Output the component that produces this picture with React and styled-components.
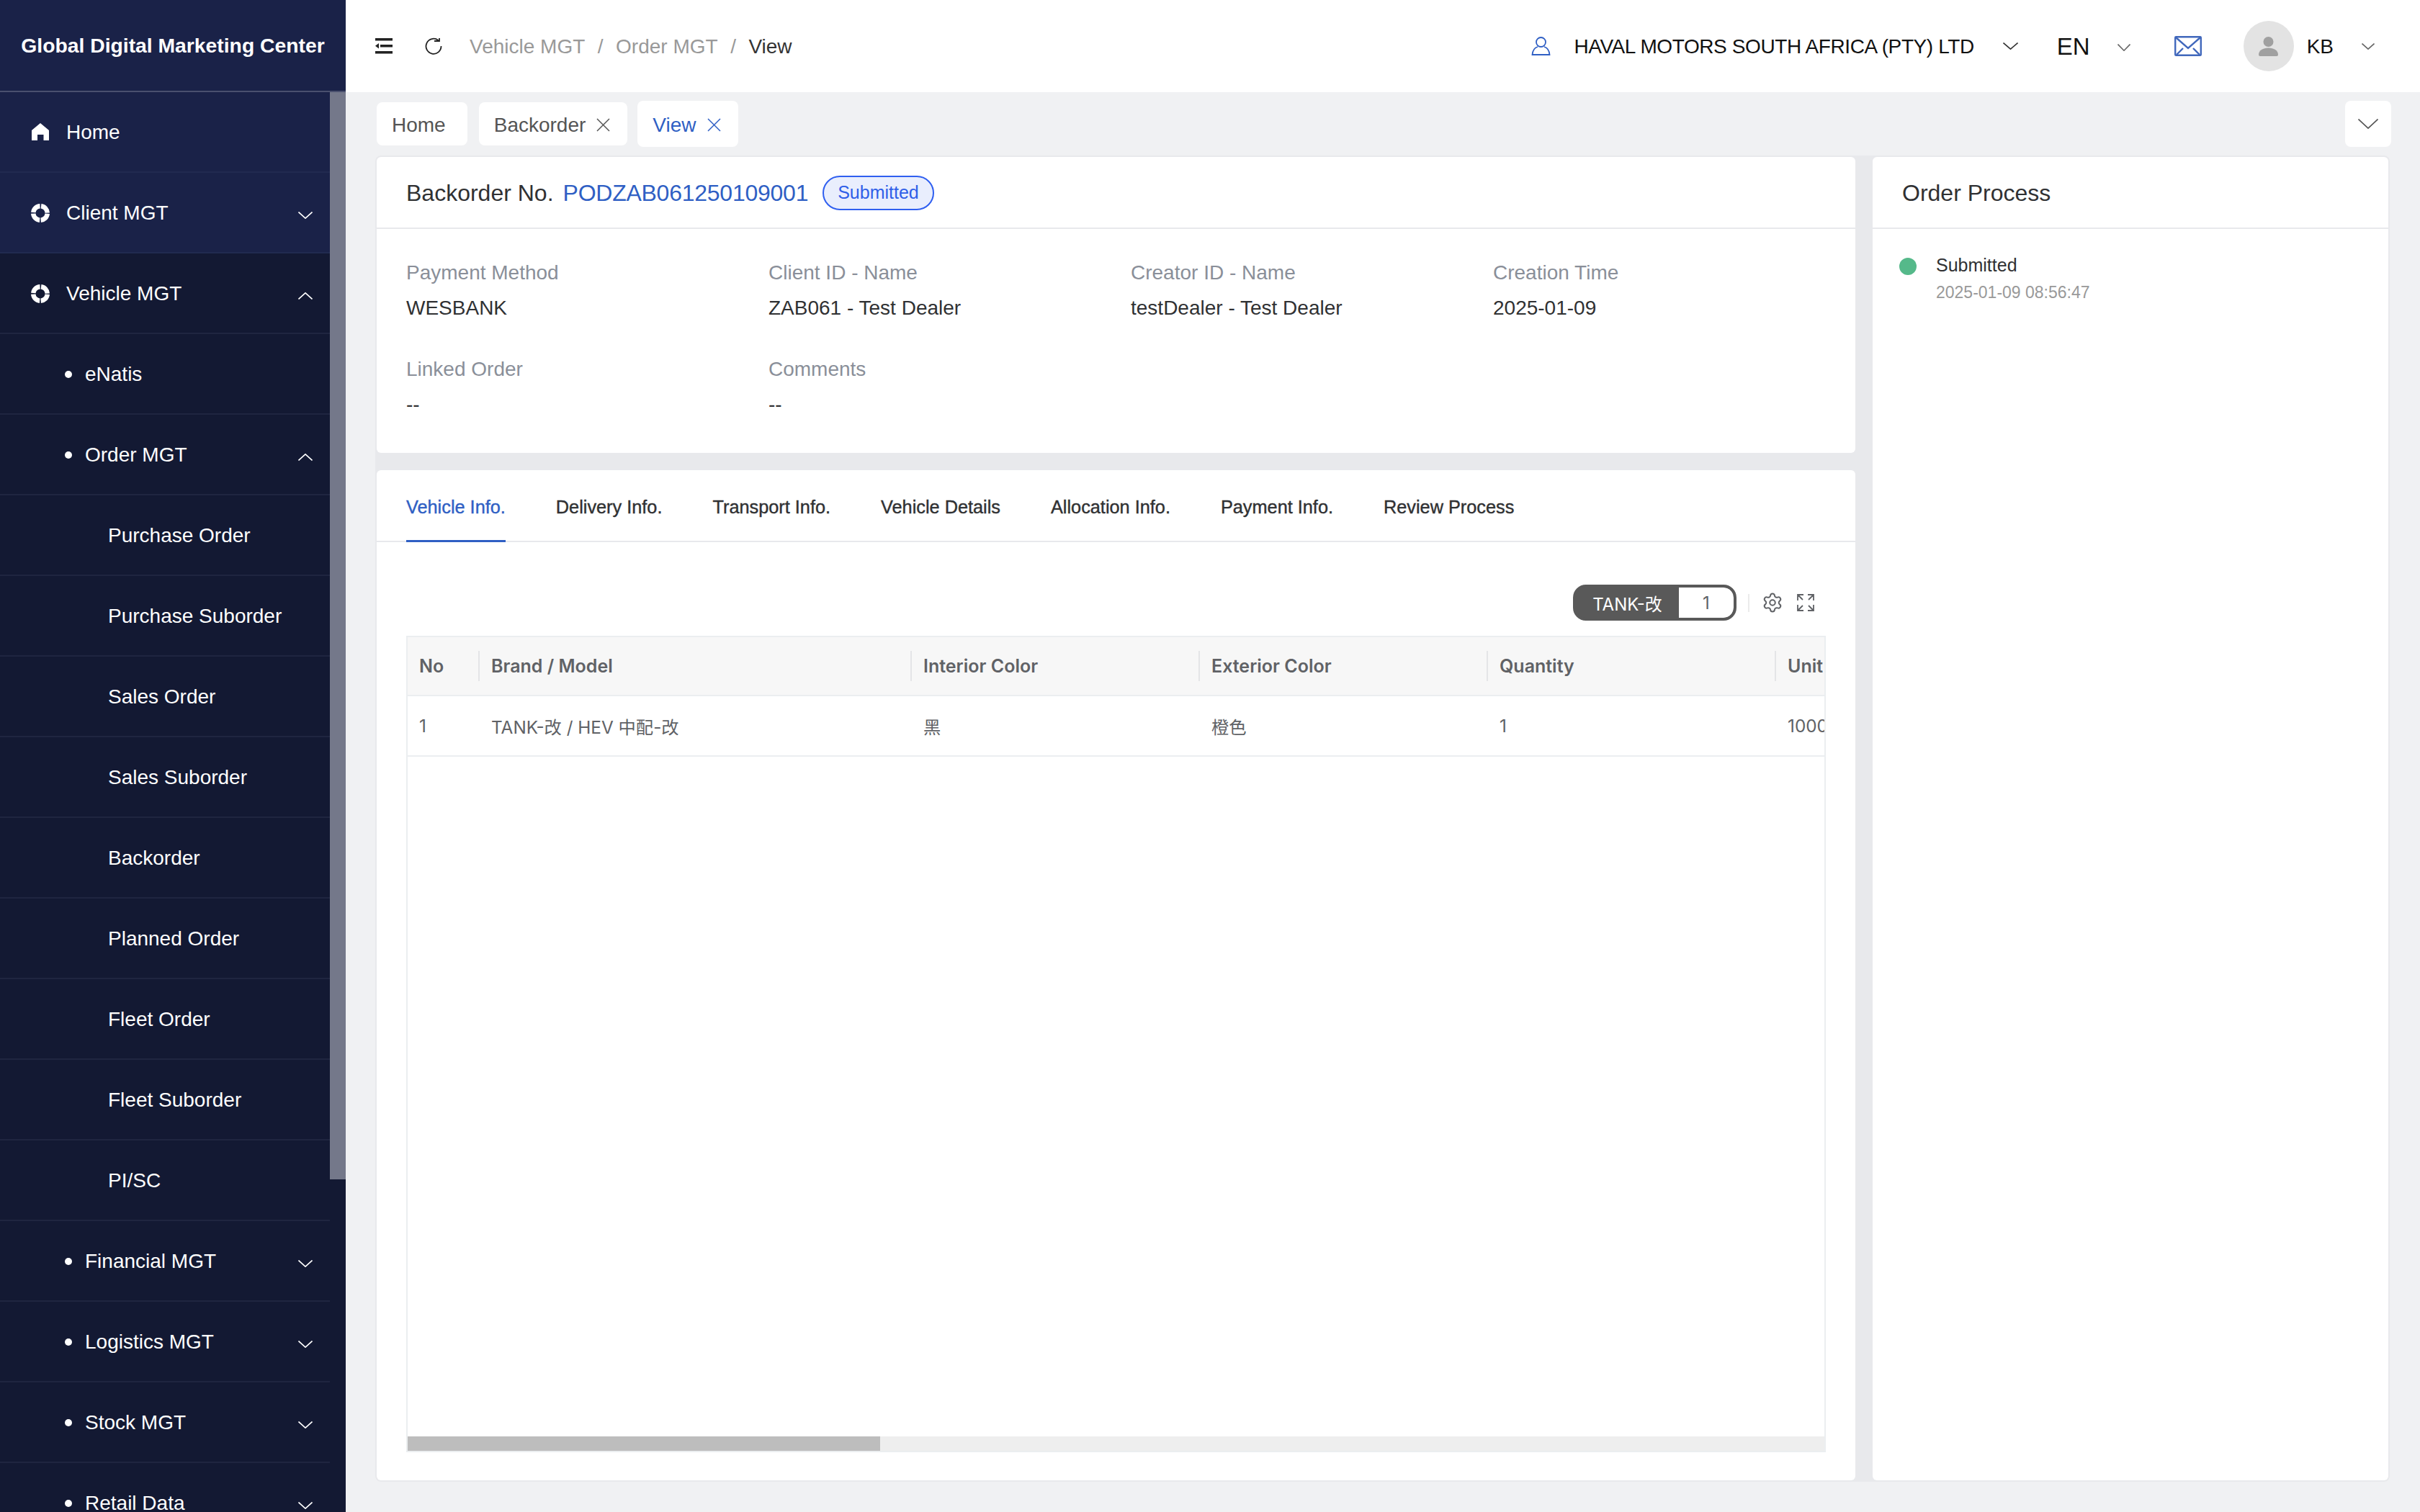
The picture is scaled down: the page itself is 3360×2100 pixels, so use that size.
import React from 'react';
import styled, { createGlobalStyle } from 'styled-components';
import { Settings } from 'lucide-react';

const GlobalStyle = createGlobalStyle`
  html, body { margin: 0; padding: 0; height: 100%; }
  body {
    background: #f0f1f3;
    font-family: 'Liberation Sans', Arial, sans-serif;
    overflow: hidden;
  }
`;

const Shell = styled.div`
  display: flex;
  width: 3360px;
  height: 2100px;
  overflow: hidden;
`;

const Sidebar = styled.aside`
  width: 480px;
  flex: none;
  display: flex;
  flex-direction: column;
  background: #131933;
`;

const Brand = styled.div`
  height: 126px;
  display: flex;
  align-items: center;
  justify-content: center;
  background: #1a2248;
  border-bottom: 2px solid #4a506e;
  color: #fff;
  font-size: 28.3px;
  font-weight: 700;
  line-height: 130px;
`;

const SideBody = styled.div`
  flex: 1;
  display: flex;
  min-height: 0;
`;

const Menu = styled.nav`
  width: 458px;
  flex: none;
  overflow: hidden;
`;

const Rail = styled.div`
  width: 22px;
  flex: none;
`;

const Thumb = styled.div`
  height: 1510px;
  background: #74788a;
`;

const Row = styled.div`
  box-sizing: border-box;
  height: 112px;
  display: flex;
  align-items: center;
  color: #fff;
  font-size: 28px;
  padding-top: 2px;
  padding-right: 24px;
  padding-left: ${p => (p.$level === 3 ? 150 : p.$level === 2 ? 90 : 43)}px;
  background: ${p => (p.$light ? '#1a2248' : '#131933')};
  border-bottom: 2px solid ${p => (p.$light ? '#212a50' : '#1f2540')};
`;

const RowIcon = styled.span`
  width: 26px;
  height: 26px;
  margin-right: 23px;
  display: flex;
  justify-content: center;
  color: #fff;
`;

const Dot = styled.span`
  width: 10px;
  height: 10px;
  border-radius: 50%;
  background: #fff;
  margin-right: 18px;
`;

const RowLabel = styled.span`
  flex: 1;
`;

const ChevronWrap = styled.svg`
  flex: none;
  display: block;
  fill: none;
  stroke: ${p => p.$color || 'currentColor'};
  stroke-width: ${p => p.$stroke || 1.6};
  margin-top: ${p => p.$drop || 0}px;
`;

const Chevron = ({ up, w = 20, h = 10, color, drop, stroke }) => (
  <ChevronWrap width={w} height={h} viewBox={`0 0 ${w} ${h}`} $color={color} $drop={drop} $stroke={stroke}>
    <path d={up ? `M0.5 ${h - 0.5} L${w / 2} 0.8 L${w - 0.5} ${h - 0.5}` : `M0.5 0.5 L${w / 2} ${h - 0.8} L${w - 0.5} 0.5`} />
  </ChevronWrap>
);

const Main = styled.main`
  flex: 1;
  min-width: 0;
  display: flex;
  flex-direction: column;
`;

const TopBar = styled.header`
  height: 128px;
  flex: none;
  background: #fff;
  display: flex;
  align-items: center;
  padding: 0 63px 0 41px;
`;

const Slot = styled.span`
  display: flex;
  flex: none;
  margin-left: ${p => p.$left || 0}px;
`;

const Crumbs = styled.div`
  flex: 1;
  display: flex;
  align-items: center;
  margin-left: 38px;
  padding-top: 2px;
  font-size: 28px;
  color: #999;
`;

const CrumbSep = styled.span`
  margin: 0 17.5px;
  color: #999;
`;

const CrumbNow = styled.span`
  color: #333;
`;

const Org = styled.span`
  margin-left: 32px;
  padding-top: 2px;
  font-size: 28px;
  letter-spacing: -0.4px;
  color: #111;
`;

const Lang = styled.span`
  margin-left: 54px;
  padding-top: 1px;
  font-size: 33px;
  color: #111;
`;

const Avatar = styled.span`
  width: 70px;
  height: 70px;
  margin-left: 58px;
  border-radius: 50%;
  background: #e3e3e3;
  display: flex;
  align-items: center;
  justify-content: center;
`;

const UserName = styled.span`
  margin-left: 18px;
  padding-top: 2px;
  font-size: 28px;
  color: #111;
`;

const TabBar = styled.div`
  height: 88px;
  flex: none;
  box-sizing: border-box;
  padding: 12px 40px 0 43px;
  display: flex;
  align-items: flex-start;
`;

const PageTab = styled.div`
  box-sizing: border-box;
  height: ${p => (p.$active ? 64 : 60)}px;
  margin-top: ${p => (p.$active ? 0 : 2)}px;
  margin-left: ${p => (p.$active ? -2 : 0)}px;
  margin-right: 16px;
  padding: 3px ${p => (p.$plain ? 30 : 24)}px 0 21px;
  display: flex;
  align-items: center;
  gap: 15px;
  background: #fff;
  border-radius: 8px;
  font-size: 28px;
  color: ${p => (p.$active ? '#2f5fc4' : '#555')};
`;

const TabMenuButton = styled.div`
  margin-left: auto;
  width: 64px;
  height: 64px;
  border-radius: 8px;
  background: #fff;
  display: flex;
  align-items: center;
  justify-content: center;
`;

const Content = styled.div`
  flex: 1;
  min-height: 0;
  display: flex;
  padding: 0 42px 42px 41px;
`;

const Deck = styled.div`
  flex: 1;
  min-width: 0;
  display: flex;
  gap: 24px;
  padding: 2px;
  background: #e8e9ec;
  border-radius: 8px;
`;

const LeftColumn = styled.div`
  width: 2053px;
  flex: none;
  display: flex;
  flex-direction: column;
  gap: 24px;
`;

const Card = styled.section`
  background: #fff;
  border-radius: 6px;
  display: flex;
  flex-direction: column;
  ${p => p.$grow && 'flex: 1; min-height: 0; min-width: 0;'}
`;

const CardHead = styled.div`
  height: 100px;
  flex: none;
  box-sizing: border-box;
  border-bottom: 2px solid #e8e9ec;
  display: flex;
  align-items: center;
  padding: 2px 41px 0;
  font-size: 32px;
  color: #303133;
`;

const OrderNo = styled.span`
  margin-left: 13px;
  letter-spacing: -0.25px;
  color: #2f5fc4;
`;

const StatusBadge = styled.span`
  box-sizing: border-box;
  height: 48px;
  margin-left: 20px;
  margin-top: -1px;
  padding: 0 19px;
  display: flex;
  align-items: center;
  border: 2px solid #2f5ff0;
  border-radius: 24px;
  background: #e9eefd;
  color: #2f5fe8;
  font-size: 25px;
`;

const InfoGrid = styled.div`
  display: grid;
  grid-template-columns: repeat(4, 503px);
  grid-auto-rows: 134px;
  padding: 44px 41px 0;
  height: 311px;
  box-sizing: border-box;
`;

const Field = styled.div`
  display: flex;
  flex-direction: column;
  gap: 16px;
  font-size: 28px;
  line-height: 33px;
`;

const FieldLabel = styled.span`
  color: #8a8f99;
`;

const FieldValue = styled.span`
  color: #303133;
`;

const TabStrip = styled.div`
  height: 100px;
  flex: none;
  box-sizing: border-box;
  border-bottom: 2px solid #e8e9ec;
  display: flex;
  padding-left: 41px;
  gap: 70px;
`;

const StripTab = styled.div`
  height: 100px;
  box-sizing: border-box;
  display: flex;
  align-items: center;
  padding-top: 6px;
  font-size: 25.3px;
  -webkit-text-stroke: 0.4px currentColor;
  color: ${p => (p.$active ? '#2f5fc4' : '#303133')};
  border-bottom: 3px solid ${p => (p.$active ? '#2f5fc4' : 'transparent')};
`;

const TablePane = styled.div`
  flex: 1;
  min-height: 0;
  display: flex;
  flex-direction: column;
  padding: 59px 41px 39px;
`;

const Toolbar = styled.div`
  height: 50px;
  flex: none;
  margin-bottom: 21px;
  display: flex;
  align-items: center;
  justify-content: flex-end;
  padding-right: 16px;
`;

const SummaryPill = styled.div`
  box-sizing: border-box;
  width: 227px;
  height: 50px;
  display: flex;
  border: 4px solid #595959;
  border-radius: 18px;
  background: #595959;
  overflow: hidden;
  font-family: Inter, 'Noto Sans CJK SC', sans-serif;
  font-size: 24px;
`;

const PillName = styled.span`
  width: 143px;
  flex: none;
  display: flex;
  align-items: center;
  justify-content: center;
  color: #fff;
`;

const PillCount = styled.span`
  flex: 1;
  display: flex;
  align-items: center;
  justify-content: center;
  background: #fff;
  color: #606266;
  border-radius: 0 14px 14px 0;
`;

const ToolDivider = styled.span`
  width: 2px;
  height: 25px;
  margin: 0 17px 0 16px;
  background: #ebebeb;
`;

const GearIcon = styled(Settings)`
  display: block;
  flex: none;
  color: #606266;
  margin-right: 19px;
`;

const ToolIcon = styled.svg`
  display: block;
  flex: none;
  fill: none;
  stroke: #606266;
  stroke-width: 1.8;
`;

const TableFrame = styled.div`
  flex: 1;
  min-height: 0;
  box-sizing: border-box;
  display: flex;
  flex-direction: column;
  border: 2px solid #ebeef0;
  overflow: hidden;
  font-family: Inter, 'Noto Sans CJK SC', sans-serif;
  font-size: 24.3px;
  color: #606266;
`;

const TableRow = styled.div`
  box-sizing: border-box;
  flex: none;
  display: grid;
  grid-template-columns: 98px 600px 400px 400px 400px 400px;
  height: ${p => (p.$head ? 82 : 84)}px;
  background: ${p => (p.$head ? '#f7f7f7' : '#fff')};
  border-bottom: 2px solid #ebeef0;
  align-items: center;
`;

const Cell = styled.div`
  box-sizing: border-box;
  padding-left: 18px;
  white-space: nowrap;
  overflow: hidden;
  font-size: ${p => (p.$head ? '25px' : 'inherit')};
  font-weight: ${p => (p.$head ? 600 : 400)};
  &:first-child { padding-left: 16px; }
  ${p => p.$divided && `padding-left: 16px; border-left: 2px solid #e4e5e7; height: 42px; display: flex; align-items: center;`}
`;

const TableSpace = styled.div`
  flex: 1;
`;

const HScroll = styled.div`
  height: 20px;
  flex: none;
  background: #eee;
`;

const HThumb = styled.div`
  width: 656px;
  height: 100%;
  background: #bdbdbd;
`;

const StepRow = styled.div`
  display: flex;
  padding: 36px 0 0 37px;
`;

const StepDot = styled.span`
  width: 24px;
  height: 24px;
  margin-top: 4px;
  flex: none;
  border-radius: 50%;
  background: #55b98a;
`;

const StepText = styled.div`
  margin-left: 27px;
  display: flex;
  flex-direction: column;
  gap: 10px;
`;

const StepName = styled.span`
  font-size: 25px;
  line-height: 28px;
  color: #303133;
`;

const StepTime = styled.span`
  font-size: 23px;
  line-height: 28px;
  color: #999;
`;

const RingMark = () => (
  <svg width="26" height="26" viewBox="0 0 26 26" fill="none" stroke="currentColor" strokeWidth="6.5">
    <circle cx="13" cy="13" r="9.75" strokeDasharray="13.7 1.62" strokeDashoffset="-0.81" />
  </svg>
);

const HomeMark = () => (
  <svg width="24" height="24" viewBox="0 0 24 24" fill="currentColor">
    <path d="M12 0 L24 10 V24 H16.5 V16 H8 V24 H0 V10 Z" />
  </svg>
);

const CloseMark = ({ color }) => (
  <svg width="19" height="19" viewBox="0 0 19 19" fill="none" stroke={color} strokeWidth="1.5">
    <path d="M1 1 L18 18 M18 1 L1 18" />
  </svg>
);

const menu = [
  { label: 'Home', icon: <HomeMark />, light: true },
  { label: 'Client MGT', icon: <RingMark />, light: true, arrow: 'down' },
  { label: 'Vehicle MGT', icon: <RingMark />, arrow: 'up' },
  { label: 'eNatis', level: 2 },
  { label: 'Order MGT', level: 2, arrow: 'up' },
  { label: 'Purchase Order', level: 3 },
  { label: 'Purchase Suborder', level: 3 },
  { label: 'Sales Order', level: 3 },
  { label: 'Sales Suborder', level: 3 },
  { label: 'Backorder', level: 3 },
  { label: 'Planned Order', level: 3 },
  { label: 'Fleet Order', level: 3 },
  { label: 'Fleet Suborder', level: 3 },
  { label: 'PI/SC', level: 3 },
  { label: 'Financial MGT', level: 2, arrow: 'down' },
  { label: 'Logistics MGT', level: 2, arrow: 'down' },
  { label: 'Stock MGT', level: 2, arrow: 'down' },
  { label: 'Retail Data', level: 2, arrow: 'down' },
];

const fields = [
  ['Payment Method', 'WESBANK'],
  ['Client ID - Name', 'ZAB061 - Test Dealer'],
  ['Creator ID - Name', 'testDealer - Test Dealer'],
  ['Creation Time', '2025-01-09'],
  ['Linked Order', '--'],
  ['Comments', '--'],
];

const stripTabs = ['Vehicle Info.', 'Delivery Info.', 'Transport Info.', 'Vehicle Details', 'Allocation Info.', 'Payment Info.', 'Review Process'];

export default function App() {
  return (
    <>
      <GlobalStyle />
      <Shell>
        <Sidebar>
          <Brand>Global Digital Marketing Center</Brand>
          <SideBody>
            <Menu>
              {menu.map(item => (
                <Row key={item.label} $level={item.level} $light={item.light}>
                  {item.icon && <RowIcon>{item.icon}</RowIcon>}
                  {item.level === 2 && <Dot />}
                  <RowLabel>{item.label}</RowLabel>
                  {item.arrow && <Chevron up={item.arrow === 'up'} color="#fff" drop={6} />}
                </Row>
              ))}
            </Menu>
            <Rail><Thumb /></Rail>
          </SideBody>
        </Sidebar>

        <Main>
          <TopBar>
            <svg width="24" height="22" viewBox="0 0 24 22" fill="#222">
              <rect x="0" y="0" width="24" height="3.5" />
              <rect x="7" y="9" width="17" height="3.5" />
              <rect x="0" y="18" width="24" height="3.5" />
              <path d="M5 7 L0 10.8 L5 14.5 Z" />
            </svg>
            <Slot $left={45}>
              <svg width="24" height="24" viewBox="0 0 24 24" fill="none" stroke="#222" strokeWidth="1.8">
                <path d="M18.5 4 A10.5 10.5 0 1 0 22.5 12" />
                <path d="M13 5 H20 V1" />
              </svg>
            </Slot>
            <Crumbs>
              <span>Vehicle MGT</span>
              <CrumbSep>/</CrumbSep>
              <span>Order MGT</span>
              <CrumbSep>/</CrumbSep>
              <CrumbNow>View</CrumbNow>
            </Crumbs>
            <svg width="27" height="26" viewBox="0 0 27 26" fill="none" stroke="#2f5fc4" strokeWidth="1.8">
              <ellipse cx="13.5" cy="7.5" rx="6.5" ry="6.5" />
              <path d="M9 14 C4 15.5 2 19 1.5 25 H25.5 C25 19 23 15.5 18 14" />
            </svg>
            <Org>HAVAL MOTORS SOUTH AFRICA (PTY) LTD</Org>
            <Slot $left={40}><Chevron color="#333" w={21} h={10} /></Slot>
            <Lang>EN</Lang>
            <Slot $left={38}><Chevron color="#666" w={18} h={10} drop={4} /></Slot>
            <Slot $left={61}>
              <svg width="38" height="28" viewBox="0 0 38 28" fill="none" stroke="#4168bc" strokeWidth="2.4">
                <rect x="1.2" y="1.2" width="35.6" height="25.6" rx="1" />
                <path d="M2 2 L19 17 L36 2 M3 26 L12 17 M35 26 L26 17" />
              </svg>
            </Slot>
            <Avatar>
              <svg width="27" height="27" viewBox="0 0 27 27" fill="#a0a0a0">
                <circle cx="13.5" cy="7" r="7" />
                <path d="M2 27 Q0 27 0 25 C0 19 6 15.5 13.5 15.5 C21 15.5 27 19 27 25 Q27 27 25 27 Z" />
              </svg>
            </Avatar>
            <UserName>KB</UserName>
            <Slot $left={39}><Chevron color="#666" w={18} h={9} /></Slot>
          </TopBar>

          <TabBar>
            <PageTab $plain>Home</PageTab>
            <PageTab>Backorder <CloseMark color="#555" /></PageTab>
            <PageTab $active>View <CloseMark color="#2f5fc4" /></PageTab>
            <TabMenuButton><Chevron color="#555" w={28} h={14} /></TabMenuButton>
          </TabBar>

          <Content>
            <Deck>
              <LeftColumn>
                <Card>
                  <CardHead>
                    Backorder No.
                    <OrderNo>PODZAB061250109001</OrderNo>
                    <StatusBadge>Submitted</StatusBadge>
                  </CardHead>
                  <InfoGrid>
                    {fields.map(([label, value]) => (
                      <Field key={label}>
                        <FieldLabel>{label}</FieldLabel>
                        <FieldValue>{value}</FieldValue>
                      </Field>
                    ))}
                  </InfoGrid>
                </Card>

                <Card $grow>
                  <TabStrip>
                    {stripTabs.map((name, i) => (
                      <StripTab key={name} $active={i === 0}>{name}</StripTab>
                    ))}
                  </TabStrip>
                  <TablePane>
                    <Toolbar>
                      <SummaryPill>
                        <PillName>TANK-改</PillName>
                        <PillCount>1</PillCount>
                      </SummaryPill>
                      <ToolDivider />
                      <GearIcon size={30} strokeWidth={1.6} />
                      <ToolIcon width="24" height="24" viewBox="0 0 24 24">
                        <path d="M1 9 V1 H9 M1 1 L8 8 M15 1 H23 V9 M23 1 L16 8 M1 15 V23 H9 M1 23 L8 16 M23 15 V23 H15 M23 23 L16 16" />
                      </ToolIcon>
                    </Toolbar>
                    <TableFrame>
                      <TableRow $head>
                        <Cell $head>No</Cell>
                        <Cell $head $divided>Brand / Model</Cell>
                        <Cell $head $divided>Interior Color</Cell>
                        <Cell $head $divided>Exterior Color</Cell>
                        <Cell $head $divided>Quantity</Cell>
                        <Cell $head $divided>Unit Price</Cell>
                      </TableRow>
                      <TableRow>
                        <Cell>1</Cell>
                        <Cell>TANK-改 / HEV 中配-改</Cell>
                        <Cell>黑</Cell>
                        <Cell>橙色</Cell>
                        <Cell>1</Cell>
                        <Cell>1000000</Cell>
                      </TableRow>
                      <TableSpace />
                      <HScroll><HThumb /></HScroll>
                    </TableFrame>
                  </TablePane>
                </Card>
              </LeftColumn>

              <Card $grow>
                <CardHead>Order Process</CardHead>
                <StepRow>
                  <StepDot />
                  <StepText>
                    <StepName>Submitted</StepName>
                    <StepTime>2025-01-09 08:56:47</StepTime>
                  </StepText>
                </StepRow>
              </Card>
            </Deck>
          </Content>
        </Main>
      </Shell>
    </>
  );
}
